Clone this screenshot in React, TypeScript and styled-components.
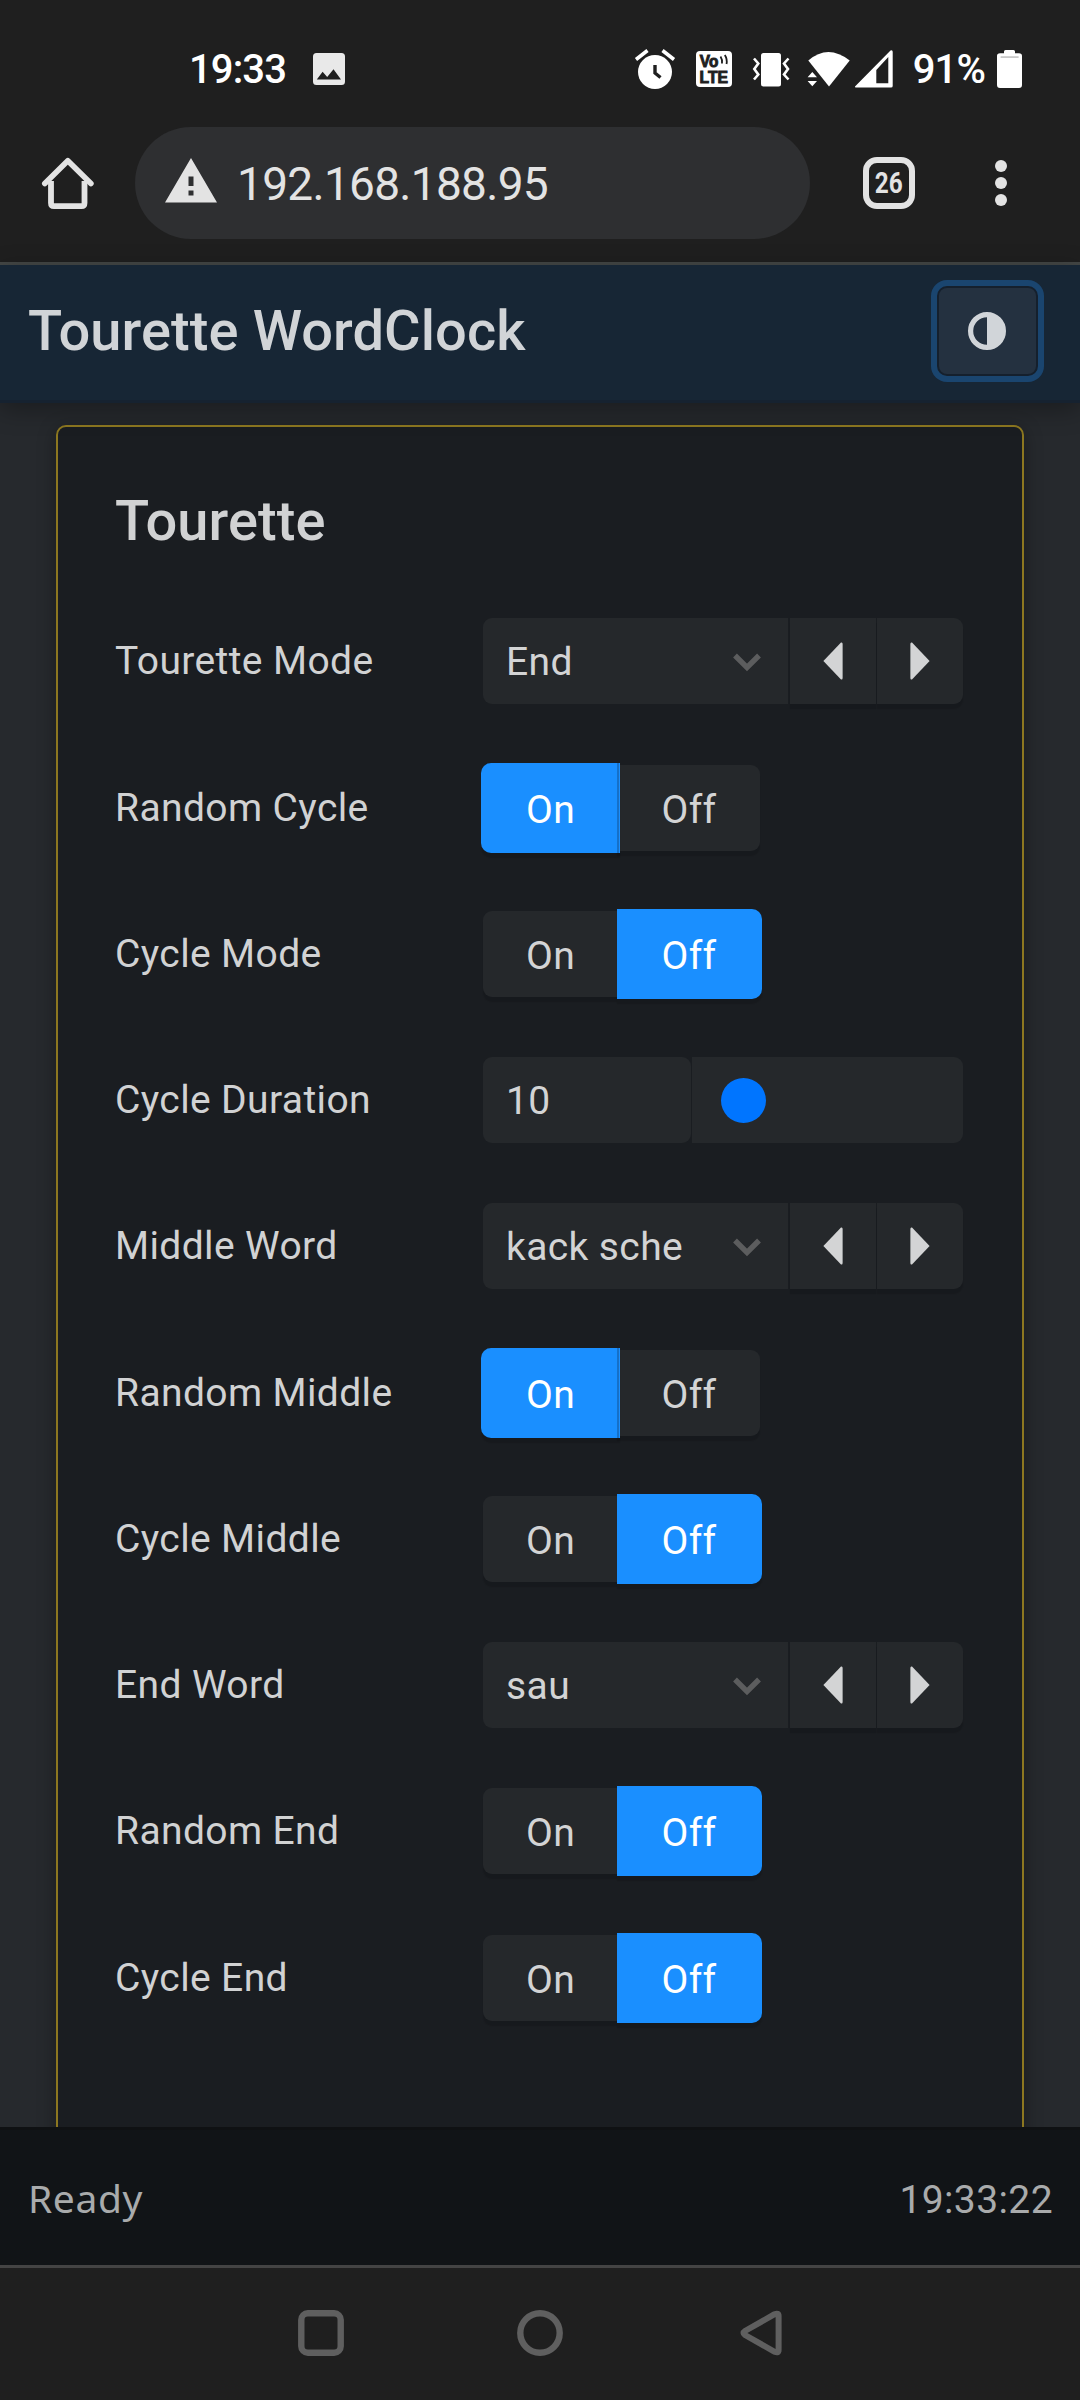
import React from "react";
import styled, { createGlobalStyle, css } from "styled-components";

const GlobalStyle = createGlobalStyle`
  *, *::before, *::after { box-sizing: border-box; }
  body {
    margin: 0;
    background: #1f1f1f;
    font-family: Roboto, "Liberation Sans", sans-serif;
  }
`;

const Screen = styled.div`
  display: flex;
  flex-direction: column;
  width: 1080px;
  height: 2400px;
  overflow: hidden;
  background: #1f1f1f;
`;

const StatusBar = styled.div`
  display: flex;
  flex: none;
  align-items: center;
  justify-content: space-between;
  height: 127px;
  padding: 11px 58px 0 189px;
  color: #fff;
`;

const StatusGroup = styled.div<{ $gap?: number }>`
  display: flex;
  align-items: center;
  gap: ${(p) => p.$gap ?? 0}px;
`;

const StatusText = styled.span<{ $before?: number }>`
  margin-left: ${(p) => p.$before ?? 0}px;
  font-size: 40px;
  font-weight: 500;
  line-height: 47px;
  letter-spacing: -0.9px;
  white-space: nowrap;
`;

const Glyph = styled.svg<{ $before?: number }>`
  display: block;
  flex: none;
  margin-left: ${(p) => p.$before ?? 0}px;
  overflow: visible;
`;

const BrowserBar = styled.div`
  display: flex;
  flex: none;
  align-items: center;
  height: 138px;
  padding: 0 73px 23px 42px;
  border-bottom: 3px solid #444746;
`;

const AddressField = styled.div`
  display: flex;
  align-items: center;
  width: 675px;
  height: 112px;
  margin-left: 41px;
  padding-left: 30px;
  border-radius: 56px;
  background: #2e2f31;
`;

const Address = styled.span`
  margin-left: 20px;
  padding-top: 2px;
  font-size: 46px;
  line-height: 54px;
  letter-spacing: -0.7px;
  color: #e3e3e3;
`;

const TabCounter = styled.div`
  display: flex;
  align-items: center;
  justify-content: center;
  width: 52px;
  height: 52px;
  margin-left: 53px;
  border: 6px solid #e3e3e3;
  border-radius: 14px;
`;

const TabCount = styled.span`
  font-size: 29px;
  font-weight: 700;
  line-height: 34px;
  color: #e3e3e3;
  transform: scaleX(0.84);
`;

const PageHeader = styled.header`
  position: relative;
  z-index: 1;
  display: flex;
  flex: none;
  align-items: center;
  justify-content: space-between;
  height: 138px;
  padding: 0 42px 0 28px;
  border-bottom: 3px solid #162230;
  background: #172635;
  box-shadow: 0 6px 24px rgba(0, 0, 0, 0.32);
`;

const PageTitle = styled.h1`
  margin: 0;
  padding-bottom: 4px;
  font-size: 56px;
  font-weight: 500;
  line-height: 66px;
  letter-spacing: 0.1px;
  color: #d1d4d7;
  white-space: nowrap;
`;

const ThemeButton = styled.button`
  display: flex;
  align-items: center;
  justify-content: center;
  width: 101px;
  height: 90px;
  margin: 0 0 3px;
  padding: 0 1px 0 0;
  border: 2px solid #15202d;
  border-radius: 10px;
  background: #243140;
  box-shadow: 0 0 0 6px #1a456f;
`;

const PageBody = styled.main`
  flex: none;
  height: 1724px;
  padding: 22px 56px 0;
  overflow: hidden;
  background: #26292d;
`;

const Card = styled.section`
  height: 1800px;
  padding: 45px 59px 0 57px;
  border: 2px solid #8c7720;
  border-radius: 10px;
  background: #1a1d21;
  box-shadow: 0 4px 18px rgba(0, 0, 0, 0.35);
`;

const CardTitle = styled.h2`
  margin: 0 0 48.4px;
  font-size: 56px;
  font-weight: 500;
  line-height: 98px;
  letter-spacing: 0.1px;
  color: #d1d2d3;
`;

const SettingRow = styled.div`
  display: grid;
  grid-template-columns: 368px 480px;
  height: 86px;
  margin-bottom: 60.25px;
`;

const Label = styled.label`
  font-size: 39px;
  line-height: 87px;
  letter-spacing: 0.38px;
  color: #d1d2d3;
  white-space: nowrap;
`;

const Controls = styled.div`
  display: flex;
  height: 86px;
`;

const field = css`
  display: flex;
  align-items: center;
  height: 86px;
  background: #25282b;
  font-size: 39px;
  line-height: 46px;
  letter-spacing: 0.4px;
  color: #d3d4d5;
  white-space: nowrap;
`;

const SelectBox = styled.div`
  ${field}
  justify-content: space-between;
  width: 305px;
  margin-right: 2px;
  padding: 1px 27px 0 23px;
  border-radius: 9px 0 0 9px;
`;

const StepButton = styled.button<{ $last?: boolean }>`
  ${field}
  justify-content: center;
  width: 86px;
  margin-right: ${(p) => (p.$last ? 0 : 1)}px;
  padding: 0;
  border: 0;
  border-radius: ${(p) => (p.$last ? "0 9px 9px 0" : "0")};
  box-shadow: 0 5px 1px rgba(0, 0, 0, 0.12);
`;

const ToggleButton = styled.button<{ $side: "left" | "right"; $active: boolean }>`
  ${field}
  justify-content: center;
  width: ${(p) => (p.$side === "left" ? 134 : 143)}px;
  padding: 4px 0 0 1px;
  border: 0;
  font-family: inherit;
  border-radius: ${(p) => (p.$side === "left" ? "9px 0 0 9px" : "0 9px 9px 0")};
  box-shadow: 0 5px 1px rgba(0, 0, 0, 0.12);
  ${(p) =>
    p.$active &&
    css`
      height: 90px;
      margin-top: -2px;
      background: #1a8fff;
      color: #fff;
    `}
  ${(p) =>
    p.$active &&
    p.$side === "left" &&
    css`
      width: 139px;
      margin-left: -2px;
      margin-right: -3px;
      padding-left: 0;
      padding-right: 0;
      border-radius: 10px 0 0 10px;
      box-shadow: inset -1px 0 #1a8fff, inset -3px 0 #1670c8, 0 5px 1px rgba(0, 0, 0, 0.12);
      z-index: 1;
    `}
  ${(p) =>
    p.$active &&
    p.$side === "right" &&
    css`
      width: 145px;
      padding-left: 0;
      padding-right: 1px;
      border-radius: 0 10px 10px 0;
    `}
`;

const NumberBox = styled.div`
  ${field}
  width: 208px;
  margin-right: 1px;
  padding: 1px 0 0 23px;
  border-radius: 9px;
`;

const SliderBox = styled.div`
  ${field}
  width: 271px;
  padding: 1px 29px 0;
  border-radius: 0 9px 9px 0;
`;

const Thumb = styled.span`
  width: 45px;
  height: 45px;
  border-radius: 50%;
  background: #0075ff;
`;

const Footer = styled.footer`
  display: flex;
  flex: none;
  align-items: center;
  justify-content: space-between;
  height: 141px;
  padding: 4px 27px 0 28px;
  border-top: 3px solid #0f1113;
  border-bottom: 3px solid #444;
  background: #111417;
  font-size: 39px;
  color: #a9abac;
`;

const Ready = styled.span`
  padding-bottom: 3px;
  font-family: "Noto Sans", sans-serif;
  line-height: 50px;
  letter-spacing: 0.6px;
`;

const Clock = styled.span`
  line-height: 50px;
  letter-spacing: 0.4px;
`;

const NavBar = styled.nav`
  display: flex;
  flex: none;
  align-items: flex-start;
  gap: 173px;
  height: 132px;
  padding: 42px 0 0 298px;
`;

type Setting = { label: string; kind: "select" | "toggle" | "range"; value: string };

const settings: Setting[] = [
  { label: "Tourette Mode", kind: "select", value: "End" },
  { label: "Random Cycle", kind: "toggle", value: "On" },
  { label: "Cycle Mode", kind: "toggle", value: "Off" },
  { label: "Cycle Duration", kind: "range", value: "10" },
  { label: "Middle Word", kind: "select", value: "kack sche" },
  { label: "Random Middle", kind: "toggle", value: "On" },
  { label: "Cycle Middle", kind: "toggle", value: "Off" },
  { label: "End Word", kind: "select", value: "sau" },
  { label: "Random End", kind: "toggle", value: "Off" },
  { label: "Cycle End", kind: "toggle", value: "Off" },
];

const Select = ({ value }: { value: string }) => (
  <>
    <SelectBox>
      {value}
      <Glyph width="28" height="18" viewBox="0 0 28 18">
        <path d="M2 2.500 L14 14.400 L26 2.500" fill="none" stroke="#5c5d5e" strokeWidth="5.400" />
      </Glyph>
    </SelectBox>
    <StepButton aria-label="Previous">
      <Glyph width="20" height="38" viewBox="0 0 20 38">
        <path d="M0.400 19 L18 0.600 Q19.600 0 19.600 2 V36 Q19.600 38 18 37.400 Z" fill="#d3d4d5" />
      </Glyph>
    </StepButton>
    <StepButton $last aria-label="Next">
      <Glyph width="20" height="38" viewBox="0 0 20 38">
        <path d="M19.600 19 L2 0.600 Q0.400 0 0.400 2 V36 Q0.400 38 2 37.400 Z" fill="#d3d4d5" />
      </Glyph>
    </StepButton>
  </>
);

const Toggle = ({ value }: { value: string }) => (
  <>
    <ToggleButton $side="left" $active={value === "On"}>On</ToggleButton>
    <ToggleButton $side="right" $active={value === "Off"}>Off</ToggleButton>
  </>
);

const Range = ({ value }: { value: string }) => (
  <>
    <NumberBox>{value}</NumberBox>
    <SliderBox>
      <Thumb />
    </SliderBox>
  </>
);

const controlFor = { select: Select, toggle: Toggle, range: Range };

export default function App() {
  return (
    <Screen>
      <GlobalStyle />
      <StatusBar>
        <StatusGroup $gap={27}>
          <StatusText>19:33</StatusText>
          <Glyph width="32" height="32" viewBox="0 0 32 32">
            <path
              fill="#e9e9e9"
              fillRule="evenodd"
              d="M3.500 0 H28.500 Q32 0 32 3.500 V28.500 Q32 32 28.500 32 H3.500 Q0 32 0 28.500 V3.500 Q0 0 3.500 0 Z M3.800 26.500 H28 L20.500 16.200 L14.200 24 L9.600 18.800 Z"
            />
          </Glyph>
        </StatusGroup>
        <StatusGroup>
          <Glyph width="40" height="40" viewBox="635 49 40 40">
            <circle cx="655" cy="72" r="17" fill="#fff" />
            <path d="M636 59.500 L647.500 50.500 M674 59.500 L662.500 50.500" stroke="#fff" strokeWidth="3.600" />
            <path d="M655 65 V73 L660.500 77.500" fill="none" stroke="#1f1f1f" strokeWidth="3.400" />
          </Glyph>
          <Glyph $before={21} width="36" height="36" viewBox="0 0 36 36">
            <rect width="36" height="36" rx="4" fill="#fff" />
            <g fontFamily="Liberation Sans" fontWeight="700" fontSize="16.500" fill="#1f1f1f" stroke="#1f1f1f" strokeWidth="1">
              <text x="3.800" y="15.800" textLength="18.500" lengthAdjust="spacingAndGlyphs">Vo</text>
              <text x="3.600" y="32" textLength="28.500" lengthAdjust="spacingAndGlyphs">LTE</text>
            </g>
            <path d="M24.500 5.500 Q26.500 8.500 26 12.500 M28.800 4 Q31.500 8 30.500 13" fill="none" stroke="#1f1f1f" strokeWidth="1.800" />
          </Glyph>
          <Glyph $before={20} width="38" height="36" viewBox="752 51 38 36">
            <rect x="761" y="53" width="20" height="33.500" rx="2.500" fill="#fff" />
            <path
              d="M754 58.500 L758.300 63.500 L754.300 69 L758.300 74.500 L754 79.500 M788.500 58.500 L784 63.500 L788 69 L784 74.500 L788.500 79.500"
              fill="none"
              stroke="#fff"
              strokeWidth="2.600"
            />
          </Glyph>
          <Glyph $before={18} width="42" height="36" viewBox="808 51 42 36">
            <path d="M829 86.500 L808.300 60.500 Q828 43.500 849.700 60.500 Z" fill="#fff" />
            <path d="M812.300 72 L817 77.200 H807.600 Z M807.600 81 H817 L812.300 86.300 Z" fill="#fff" />
          </Glyph>
          <Glyph $before={5} width="38" height="38" viewBox="855 50 38 38">
            <path
              d="M855 86.500 L890.500 50.500 Q892.700 49.500 892.700 52 V86 Q892.700 87.500 891 87.500 H856 Q854.500 87.500 855 86.500 Z M876.300 70 V83.300 H888.300 V57 Z"
              fill="#fff"
              fillRule="evenodd"
            />
          </Glyph>
          <StatusText $before={20}>91%</StatusText>
          <Glyph $before={12} width="25" height="38" viewBox="0 0 25 38">
            <path
              d="M8.500 0 H16.500 Q18 0 18 1.500 V3.200 H22 Q25 3.200 25 6 V35 Q25 38 22 38 H3 Q0 38 0 35 V6 Q0 3.200 3 3.200 H7 V1.500 Q7 0 8.500 0 Z"
              fill="#fff"
            />
            <rect x="3.600" y="6.200" width="18" height="1.800" fill="#c9c9c9" />
          </Glyph>
        </StatusGroup>
      </StatusBar>

      <BrowserBar>
        <Glyph width="52" height="52" viewBox="0 0 52 52">
          <path d="M9 24 V46 Q9 49.200 12 49.200 H39.500 Q42.500 49.200 42.500 46 V24" fill="none" stroke="#e3e3e3" strokeWidth="5.800" />
          <path d="M2.800 26.500 L25.800 3.800 L48.900 26.500" fill="none" stroke="#e3e3e3" strokeWidth="5.600" strokeLinecap="round" strokeLinejoin="round" />
        </Glyph>
        <AddressField>
          <Glyph width="52" height="52" viewBox="0 0 52 52">
            <path d="M26 1 L52 45.500 H0 Z M23.500 19.500 V29 H28.500 V19.500 Z M23.500 33.500 V38.500 H28.500 V33.500 Z" fill="#e3e3e3" fillRule="evenodd" />
          </Glyph>
          <Address>192.168.188.95</Address>
        </AddressField>
        <TabCounter>
          <TabCount>26</TabCount>
        </TabCounter>
        <Glyph $before={80} width="12" height="46" viewBox="0 0 12 46">
          <g fill="#e3e3e3">
            <circle cx="6" cy="6" r="6" />
            <circle cx="6" cy="23" r="6" />
            <circle cx="6" cy="40" r="6" />
          </g>
        </Glyph>
      </BrowserBar>

      <PageHeader>
        <PageTitle>Tourette WordClock</PageTitle>
        <ThemeButton aria-label="Toggle theme">
          <Glyph width="38" height="38" viewBox="0 0 38 38">
            <circle cx="19" cy="19" r="16.400" fill="none" stroke="#d1d5d9" strokeWidth="5.200" />
            <path d="M19 2 A17 17 0 0 1 19 36 Z" fill="#d1d5d9" />
          </Glyph>
        </ThemeButton>
      </PageHeader>

      <PageBody>
        <Card>
          <CardTitle>Tourette</CardTitle>
          {settings.map((s) => {
            const Control = controlFor[s.kind];
            return (
              <SettingRow key={s.label}>
                <Label>{s.label}</Label>
                <Controls>
                  <Control value={s.value} />
                </Controls>
              </SettingRow>
            );
          })}
        </Card>
      </PageBody>

      <Footer>
        <Ready>Ready</Ready>
        <Clock>19:33:22</Clock>
      </Footer>

      <NavBar>
        <Glyph width="46" height="46" viewBox="0 0 46 46">
          <rect x="3.300" y="3.300" width="39.400" height="39.400" rx="6.500" fill="none" stroke="#5f5f5f" strokeWidth="6.400" />
        </Glyph>
        <Glyph width="46" height="46" viewBox="0 0 46 46">
          <circle cx="23" cy="23" r="19.700" fill="none" stroke="#5f5f5f" strokeWidth="6.400" />
        </Glyph>
        <Glyph $before={4} width="42" height="46" viewBox="0 0 42 46">
          <path
            d="M34.600 4.200 L5 21 Q2 23 5 25 L34.600 41.800 Q38.600 43.500 38.600 40 V6 Q38.600 2.500 34.600 4.200 Z"
            fill="none"
            stroke="#5f5f5f"
            strokeWidth="6"
          />
        </Glyph>
      </NavBar>
    </Screen>
  );
}
